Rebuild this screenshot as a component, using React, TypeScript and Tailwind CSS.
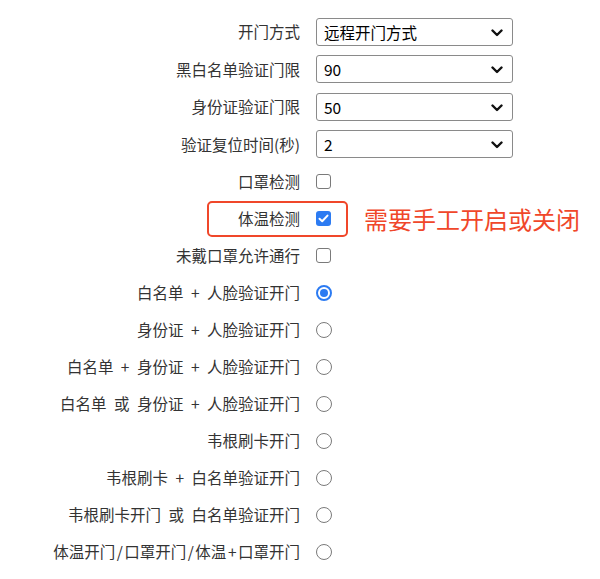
const labelCls = "w-[300px] shrink-0 text-right text-[15.5px] text-[#333] [word-spacing:4px]"

const selects = [
  { label: "开门方式", value: "远程开门方式" },
  { label: "黑白名单验证门限", value: "90" },
  { label: "身份证验证门限", value: "50" },
  { label: "验证复位时间(秒)", value: "2" },
]

const checks = [
  { label: "口罩检测", checked: false },
  { label: "体温检测", checked: true, marked: true },
  { label: "未戴口罩允许通行", checked: false },
]

const radios = [
  "白名单 + 人脸验证开门",
  "身份证 + 人脸验证开门",
  "白名单 + 身份证 + 人脸验证开门",
  "白名单 或 身份证 + 人脸验证开门",
  "韦根刷卡开门",
  "韦根刷卡 + 白名单验证开门",
  "韦根刷卡开门 或 白名单验证开门",
  "体温开门/口罩开门/体温+口罩开门",
]

// slashes and plus signs in the last label sit a bit wider in the screenshot
function Label({ text }: { text: string }) {
  const parts = text.split(/([/+])/)
  if (text.includes(" ")) return <div className={labelCls}>{text}</div>
  return (
    <div className={labelCls}>
      {parts.map((p, i) =>
        p === "/" || p === "+" ? (
          <span key={i} className="mx-[1.5px]">{p}</span>
        ) : (
          <span key={i}>{p}</span>
        )
      )}
    </div>
  )
}

function Chevron() {
  return (
    <svg width="12" height="8" viewBox="0 0 12 8" className="absolute right-[9px] top-[10px]">
      <path d="M1.5 1.5 L6 6 L10.5 1.5" fill="none" stroke="#111" strokeWidth="2.4" strokeLinecap="round" strokeLinejoin="round" />
    </svg>
  )
}

function Select({ value }: { value: string }) {
  return (
    <div className="relative w-[197px] h-[28px] rounded-[3px] border border-[#8a8a8a] bg-white">
      <span className="absolute left-[7px] top-[3px] text-[15.5px] text-black leading-[20px]">{value}</span>
      <Chevron />
    </div>
  )
}

function Checkbox({ checked }: { checked: boolean }) {
  if (checked) {
    return (
      <div className="w-[15px] h-[15px] rounded-[3px] bg-[#2c7bf2] flex items-center justify-center">
        <svg width="11" height="9" viewBox="0 0 11 9">
          <path d="M1.5 4.8 L4.2 7.3 L9.5 1.6" fill="none" stroke="white" strokeWidth="2" strokeLinecap="round" strokeLinejoin="round" />
        </svg>
      </div>
    )
  }
  return <div className="w-[15px] h-[15px] rounded-[3px] border border-[#7a7a7a] bg-white" />
}

function Radio({ checked }: { checked: boolean }) {
  if (checked) {
    return (
      <div className="w-[16px] h-[16px] rounded-full border-[2px] border-[#2c7bf2] flex items-center justify-center">
        <div className="w-[8px] h-[8px] rounded-full bg-[#2c7bf2]" />
      </div>
    )
  }
  return <div className="w-[16px] h-[16px] rounded-full border border-[#7a7a7a] bg-white" />
}

export default function App() {
  return (
    <div
      className="w-[600px] h-[579px] bg-white pt-[13px] overflow-hidden"
      style={{ fontFamily: '"Noto Sans CJK SC", "Liberation Sans", sans-serif' }}
    >
      {selects.map((s) => (
        <div key={s.label} className="flex items-center gap-4 h-[37.5px]">
          <Label text={s.label} />
          <Select value={s.value} />
        </div>
      ))}
      {checks.map((c) => (
        <div key={c.label} className="relative flex items-center gap-4 h-[37px]">
          <Label text={c.label} />
          <Checkbox checked={c.checked} />
          {c.marked && (
            <>
              <div className="absolute left-[207px] top-[1px] w-[141px] h-[36px] rounded-[5px] border-[2.5px] border-[#f0472a]" />
              <div className="absolute left-[364px] top-0 h-full flex items-center text-[24px] text-[#f0472a]">
                需要手工开启或关闭
              </div>
            </>
          )}
        </div>
      ))}
      {radios.map((r, i) => (
        <div key={r} className="flex items-center gap-4 h-[37px]">
          <Label text={r} />
          <Radio checked={i === 0} />
        </div>
      ))}
    </div>
  )
}
